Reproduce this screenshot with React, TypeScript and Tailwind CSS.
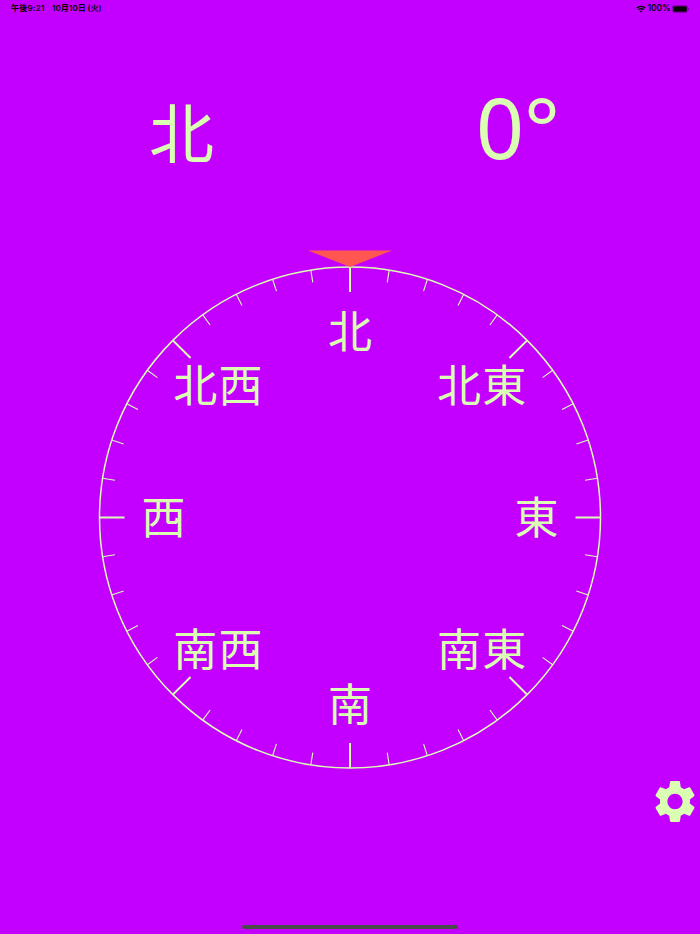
import React from "react";

const CX = 350;
const CY = 277.5;
const R = 250.5;

const points = ["北", "北東", "東", "南東", "南", "南西", "西", "北西"];

function polar(angle: number, radius: number) {
  const a = (angle * Math.PI) / 180;
  return { x: CX + radius * Math.sin(a), y: CY - radius * Math.cos(a) };
}

function StatusBar() {
  return (
    <header className="flex h-[17px] items-center justify-between pr-[10px] pl-[11px] font-['Inter','Noto_Sans_CJK_JP',sans-serif] text-[8px] leading-none font-semibold text-black">
      <div className="flex gap-[7px] pb-px whitespace-nowrap">
        <span className="w-[34px] tracking-[0.25px]">午後9:21</span>
        <span className="tracking-[0.1px]">10月10日<span className="ml-[1.5px]">(火)</span></span>
      </div>
      <div className="flex items-center">
        <svg width="10" height="8" viewBox="0 0 10 8" fill="none" stroke="black">
          <path d="M.8 3.1a6 6 0 0 1 8.4 0M2.4 4.8a3.7 3.7 0 0 1 5.2 0" strokeWidth="1.4" />
          <path d="M5 7.6 3.6 6.1a2 2 0 0 1 2.8 0z" fill="black" stroke="none" />
        </svg>
        <span className="ml-[2px] w-[23px] text-[8.5px] tracking-[-0.1px] whitespace-nowrap">100%</span>
        <svg className="ml-[1.5px]" width="18" height="8" viewBox="0 0 18 8">
          <rect x=".4" y=".4" width="15.2" height="7.2" rx="2" fill="none" stroke="black" strokeOpacity=".4" strokeWidth=".7" />
          <rect x="1.2" y="1.2" width="13.6" height="5.6" rx="1.2" />
          <path d="M16.4 2.8c1.2.4 1.2 2 0 2.4z" fillOpacity=".5" />
        </svg>
      </div>
    </header>
  );
}

function Dial() {
  return (
    <svg className="block" width="700" height="540" viewBox="0 0 700 540">
      <circle cx={CX} cy={CY} r={R} fill="none" stroke="#DAFFB3" strokeWidth="1.5" />
      {Array.from({ length: 40 }, (_, i) => {
        const major = i % 5 === 0;
        const a = polar(i * 9, R);
        const b = polar(i * 9, R - (major ? 25 : 12.5));
        return (
          <line key={i} x1={a.x} y1={a.y} x2={b.x} y2={b.y} stroke="#DAFFB3" strokeWidth={major ? 2 : 1.1} />
        );
      })}
      <path d="M308 10.5H392L350 27z" fill="#FF5652" />
      {points.map((label, i) => {
        const p = polar(i * 45, 186.5);
        return (
          <text
            key={label}
            x={p.x + (label.length - 1) * 0.5}
            y={p.y + 16.5}
            textAnchor="middle"
            fill="#DAFFB3"
            className={
              label.length > 1
                ? "font-['Noto_Sans_CJK_JP',sans-serif] text-[44px] font-normal tracking-[1.4px]"
                : "font-['Noto_Sans_CJK_JP',sans-serif] text-[44px] font-normal"
            }
          >
            {label}
          </text>
        );
      })}
    </svg>
  );
}

export default function App() {
  return (
    <div className="flex h-[934px] w-[700px] flex-col overflow-hidden bg-[#C300FF] text-[#DAFFB3]">
      <StatusBar />
      <section className="grid h-[223px] grid-cols-2 pt-[59px]">
        <div className="pt-[6px] pl-[13px] text-center font-['Noto_Sans_CJK_JP',sans-serif] text-[65px] leading-[96px] font-normal">北</div>
        <div className="pr-[14px] text-center font-['Noto_Sans',sans-serif] text-[84px] leading-[102px] font-normal">0°</div>
      </section>
      <Dial />
      <div className="flex justify-end">
        <button aria-label="設定" className="mt-[-3px] mr-[1px] block">
          <svg width="48" height="49" viewBox="0 0 24 24" preserveAspectRatio="none" fill="#DAFFB3">
            <path d="M19.43 12.98c.04-.32.07-.64.07-.98s-.03-.66-.07-.98l2.11-1.65c.19-.15.24-.42.12-.64l-2-3.46c-.12-.22-.39-.3-.61-.22l-2.49 1c-.52-.4-1.08-.73-1.69-.98l-.38-2.65C14.46 2.18 14.25 2 14 2h-4c-.25 0-.46.18-.49.42l-.38 2.65c-.61.25-1.17.59-1.69.98l-2.49-1c-.23-.09-.49 0-.61.22l-2 3.46c-.13.22-.07.49.12.64l2.11 1.65c-.04.32-.07.65-.07.98s.03.66.07.98l-2.11 1.65c-.19.15-.24.42-.12.64l2 3.46c.12.22.39.3.61.22l2.49-1c.52.4 1.08.73 1.69.98l.38 2.65c.03.24.24.42.49.42h4c.25 0 .46-.18.49-.42l.38-2.65c.61-.25 1.17-.59 1.69-.98l2.49 1c.23.09.49 0 .61-.22l2-3.46c.12-.22.07-.49-.12-.64l-2.11-1.65zM12 15.8c-2.1 0-3.8-1.7-3.8-3.8s1.7-3.8 3.8-3.8 3.8 1.7 3.8 3.8-1.7 3.8-3.8 3.8z" />
          </svg>
        </button>
      </div>
      <div className="mx-auto mt-auto mb-[5px] h-[4px] w-[216px] shrink-0 rounded-full bg-[#4A4A4A]" />
    </div>
  );
}
